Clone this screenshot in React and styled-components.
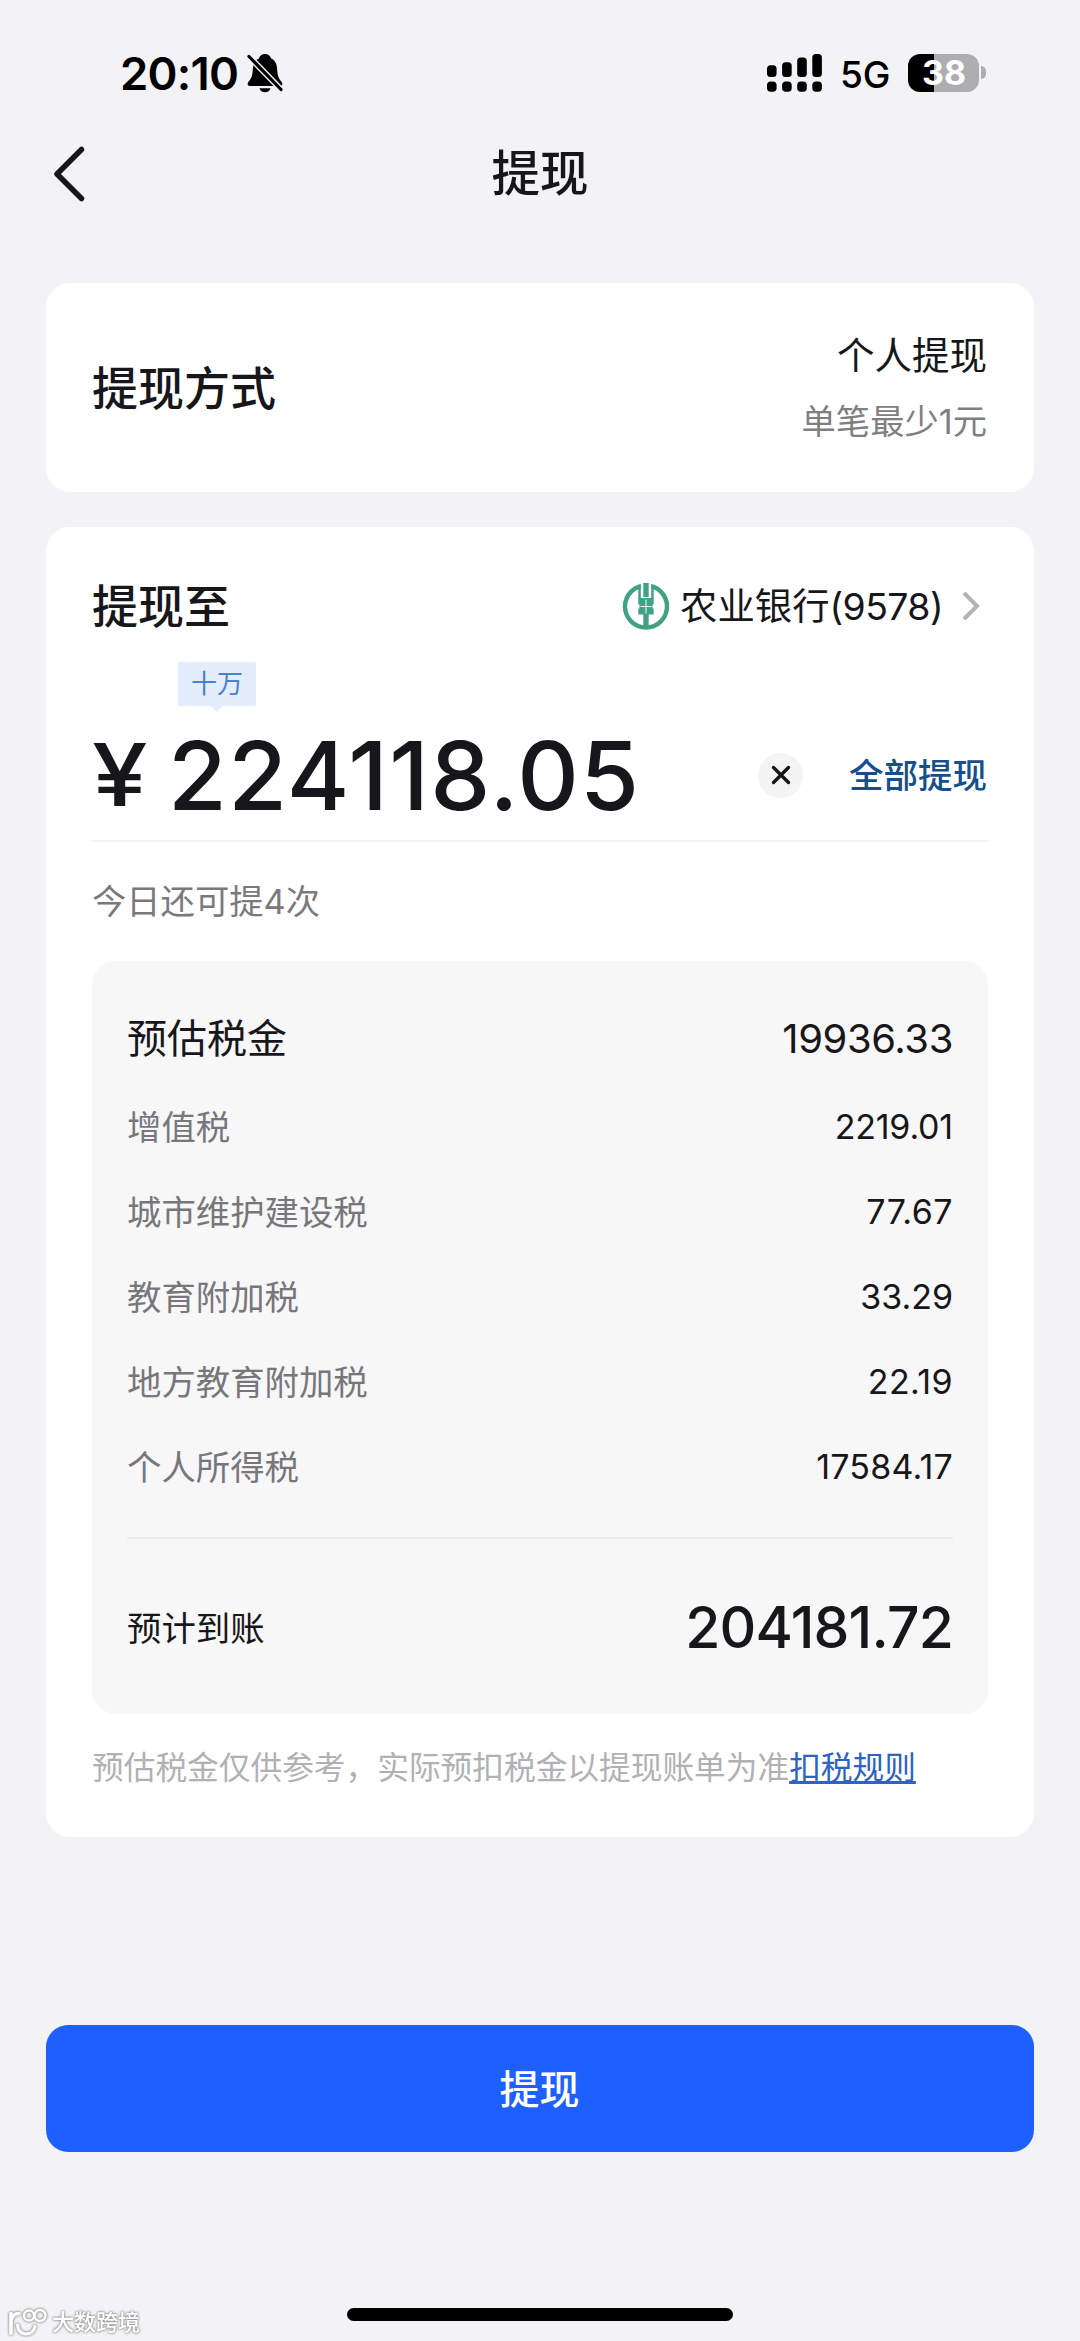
import React from "react";
import styled, { createGlobalStyle } from "styled-components";

const taxes = [
  { name: "增值税", value: "2219.01", spacing: "-0.2px" },
  { name: "城市维护建设税", value: "77.67", spacing: "0.5px" },
  { name: "教育附加税", value: "33.29" },
  { name: "地方教育附加税", value: "22.19", spacing: "0.4px" },
  { name: "个人所得税", value: "17584.17", spacing: "0.2px" },
];

export default function App() {
  return (
    <Page>
      <GlobalStyle />
      <StatusBar>
        <Clock>20:10</Clock>
        <BellOff />
        <StatusRight>
          <Signal />
          <Network>5G</Network>
          <Battery>38</Battery>
          <BatteryNub />
        </StatusRight>
      </StatusBar>
      <NavBar>
        <BackIcon />
        <Title>提现</Title>
      </NavBar>

      <MethodCard>
        <Heading>提现方式</Heading>
        <Method>
          <Text $size={37.5} $line={66}>个人提现</Text>
          <Text $size={34.3} $line={65} $color="#7f7f82">单笔最少1元</Text>
        </Method>
      </MethodCard>

      <AmountCard>
        <CardHead>
          <Heading>提现至</Heading>
          <Bank>
            <BankLogo />
            <BankName>农业银行<CardNo>(9578)</CardNo></BankName>
            <ChevronIcon />
          </Bank>
        </CardHead>
        <UnitTag>十万</UnitTag>
        <AmountRow>
          <Yen>¥</Yen>
          <Amount>224118.05</Amount>
          <ClearButton>
            <CloseIcon />
          </ClearButton>
          <AllButton>全部提现</AllButton>
        </AmountRow>
        <Text as="p" $size={34.3} $line={119} $color="#7a7a7c">今日还可提4次</Text>

        <TaxBox>
          <TaxTitle>
            <span>预估税金</span>
            <TaxSum>19936.33</TaxSum>
          </TaxTitle>
          {taxes.map((tax) => (
            <TaxRow key={tax.name}>
              <TaxName>{tax.name}</TaxName>
              <TaxValue $spacing={tax.spacing}>{tax.value}</TaxValue>
            </TaxRow>
          ))}
          <TotalRow>
            <span>预计到账</span>
            <Total>204181.72</Total>
          </TotalRow>
        </TaxBox>
        <Note>
          预估税金仅供参考，实际预扣税金以提现账单为准<RuleLink>扣税规则</RuleLink>
        </Note>
      </AmountCard>

      <SubmitButton>提现</SubmitButton>
      <HomeIndicator />
      <Watermark>
        <WatermarkLogo />
        大数跨境
      </Watermark>
    </Page>
  );
}

function BellOff() {
  return (
    <BellSvg viewBox="0 0 36 40">
      <path d="M18 1c-3.200 0-5.400 1.900-5.900 4.200C8.200 7 6 11 5.900 15.500 5.600 23 4.200 25.500 1.700 28.500c-2 2.500-1 4.500 1.300 4.500h30c2.300 0 3.300-2 1.300-4.500-2.500-3-3.900-5.500-4.200-13C30 11 27.800 7 23.900 5.200 23.400 2.900 21.200 1 18 1z" />
      <path d="M12.500 35.200h11c-.6 2.600-2.700 4-5.500 4s-4.900-1.400-5.500-4z" />
      <path d="M1.500 3 34.500 37" stroke="#f3f3f6" strokeWidth="6" />
      <path d="M2 3.500 34 36.500" stroke="#000" strokeWidth="3.200" strokeLinecap="round" />
    </BellSvg>
  );
}

function Signal() {
  const tops = [11.3, 8.3, 3.6, 0];
  return (
    <SignalSvg viewBox="0 0 55 38">
      {tops.map((y, i) => (
        <g key={y}>
          <rect x={i * 15.1} y={y} width="9.6" height={23 - y} rx="3.5" />
          <rect x={i * 15.1} y="27.5" width="9.6" height="10.3" rx="3.8" />
        </g>
      ))}
    </SignalSvg>
  );
}

function BackIcon() {
  return (
    <BackSvg viewBox="0 0 34 58">
      <path d="M29.500 4.500 5 29l24.500 24.500" />
    </BackSvg>
  );
}

function ChevronIcon() {
  return (
    <ChevronSvg viewBox="0 0 20 32">
      <path d="M3 3l13 13L3 29" />
    </ChevronSvg>
  );
}

function CloseIcon() {
  return (
    <svg width="20" height="20" viewBox="0 0 20 20" fill="none" stroke="#161618" strokeWidth="3.4" strokeLinecap="round">
      <path d="M2.500 2.500l15 15M17.500 2.500l-15 15" />
    </svg>
  );
}

function BankLogo() {
  return (
    <LogoSvg viewBox="0 0 48 48">
      <circle cx="24" cy="24.5" r="21" fill="none" stroke="#3fa383" strokeWidth="4.4" />
      <path fill="#fff" d="M18.800 0h10.400v17H18.800z" />
      <path fill="#3fa383" d="M21.300 1h5.400v14h-5.400zM16.300 3h2.500v13.500h-2.500zM29.200 3h2.500v13.500h-2.500z" />
      <path fill="#3fa383" d="M16.300 16h15.400v6.500h-1.200v4h1.200v6H16.300v-6h1.200v-4h-1.200z" />
      <path fill="#3fa383" d="M21.300 32h5.400v13h-5.400z" />
      <path d="M24 17.500v14M18.500 24.500h11" stroke="#fff" strokeWidth="1" />
    </LogoSvg>
  );
}

function WatermarkLogo() {
  return (
    <svg width="40" height="30" viewBox="0 0 40 30" fill="none" stroke="#fff" strokeLinecap="round">
      <path d="M3 6.500v20M3 13c1-4 4-6.500 8-6.500" strokeWidth="3.6" />
      <path d="M9.500 18c.5 6 4 9 8.500 9s8-3 9-7.500" strokeWidth="3.2" />
      <circle cx="21" cy="8.5" r="5" strokeWidth="2.4" />
      <circle cx="32" cy="8.5" r="5.5" strokeWidth="2.4" />
    </svg>
  );
}

const GlobalStyle = createGlobalStyle`
  * {
    box-sizing: border-box;
  }
  body {
    margin: 0;
    background: #f3f3f6;
  }
  p {
    margin: 0;
  }
  button {
    border: none;
    padding: 0;
    font-family: inherit;
    line-height: inherit;
  }
`;

const Page = styled.div`
  position: relative;
  display: flex;
  flex-direction: column;
  width: 1080px;
  height: 2341px;
  padding: 0 46px;
  overflow: hidden;
  background: #f3f3f6;
  color: #17171b;
  font-family: Inter, "Noto Sans CJK SC", sans-serif;
  line-height: 1.2;
`;

const StatusBar = styled.header`
  display: flex;
  align-items: center;
  height: 146px;
  padding: 0 48px 0 74px;
  color: #000;
`;

const Clock = styled.span`
  width: 119px;
  padding-top: 2px;
  font-size: 45.5px;
  font-weight: 600;
  letter-spacing: -0.8px;
  white-space: nowrap;
`;

const BellSvg = styled.svg`
  width: 36px;
  height: 40px;
  margin-left: 8px;
`;

const StatusRight = styled.div`
  display: flex;
  align-items: center;
  margin-left: auto;
`;

const SignalSvg = styled.svg`
  width: 55px;
  height: 38px;
  margin-right: 18px;
`;

const Network = styled.span`
  width: 51px;
  margin: 4px 17px 0 0;
  font-size: 37px;
  font-weight: 500;
`;

const Battery = styled.div`
  width: 71px;
  height: 38px;
  border-radius: 12px;
  padding-left: 1px;
  background: linear-gradient(to right, #000 26px, #aeaeb0 26px);
  color: #fff;
  font-size: 34px;
  font-weight: 700;
  line-height: 38px;
  text-align: center;
`;

const BatteryNub = styled.i`
  width: 5px;
  height: 13px;
  margin-left: 2px;
  border-radius: 0 5px 5px 0;
  background: #aeaeb0;
`;

const NavBar = styled.nav`
  display: grid;
  grid-template-columns: 34px 1fr 34px;
  align-items: center;
  height: 54px;
  margin: -1px 6px 84px;
`;

const BackSvg = styled.svg`
  width: 34px;
  height: 58px;
  fill: none;
  stroke: #17171b;
  stroke-width: 5.5;
  stroke-linecap: round;
  stroke-linejoin: round;
`;

const Title = styled.h1`
  margin: 0;
  font-size: 48.5px;
  font-weight: 500;
  line-height: 54px;
  text-align: center;
`;

const Card = styled.section`
  border-radius: 24px;
  background: #fff;
`;

const MethodCard = styled(Card)`
  display: flex;
  align-items: center;
  justify-content: space-between;
  height: 209px;
  padding: 0 46px;
`;

const Heading = styled.h2`
  margin: 0;
  font-size: 46px;
  font-weight: 500;
  line-height: 60px;
`;

const Method = styled.div`
  display: flex;
  flex-direction: column;
  align-items: flex-end;
  padding: 2px 1px 0 0;
`;

const Text = styled.span`
  color: ${(p) => p.$color || "inherit"};
  font-size: ${(p) => p.$size}px;
  line-height: ${(p) => p.$line}px;
`;

const AmountCard = styled(Card)`
  height: 1310px;
  margin-top: 35px;
  padding: 49px 46px 0;
`;

const CardHead = styled.div`
  display: flex;
  align-items: center;
  justify-content: space-between;
  height: 60px;
`;

const Bank = styled.div`
  display: flex;
  align-items: center;
`;

const LogoSvg = styled.svg`
  width: 48px;
  height: 48px;
  margin-right: 10px;
`;

const BankName = styled.span`
  width: 281px;
  padding-top: 2px;
  font-size: 37.4px;
  white-space: nowrap;
`;

const CardNo = styled.span`
  letter-spacing: -0.6px;
`;

const ChevronSvg = styled.svg`
  width: 20px;
  height: 32px;
  margin-right: 7px;
  fill: none;
  stroke: #b3b3b5;
  stroke-width: 4;
`;

const UnitTag = styled.div`
  position: relative;
  width: 78px;
  height: 44px;
  margin: 26px 0 0 86px;
  background: #e4edfb;
  color: #4a80d2;
  font-size: 26px;
  line-height: 44px;
  text-align: center;

  &::after {
    content: "";
    position: absolute;
    top: 44px;
    left: 33px;
    border: 6px solid transparent;
    border-top-color: #e4edfb;
    border-bottom: none;
  }
`;

const AmountRow = styled.div`
  display: flex;
  align-items: center;
  height: 136px;
  padding: 4px 1px 0 0;
  border-bottom: 2px solid #f1f1f2;
  white-space: nowrap;
`;

const Yen = styled.span`
  width: 76px;
  font-size: 86px;
  font-weight: 500;
  line-height: 100px;
  transform: scaleX(1.16);
  transform-origin: left;
`;

const Amount = styled.span`
  width: 500px;
  font-size: 95.5px;
  font-weight: 500;
  letter-spacing: 1.3px;
  line-height: 100px;
`;

const ClearButton = styled.button`
  display: flex;
  align-items: center;
  justify-content: center;
  width: 45px;
  height: 45px;
  margin-left: auto;
  border-radius: 50%;
  background: #f4f4f5;
`;

const AllButton = styled.button`
  margin-left: 46px;
  padding-top: 2px;
  background: none;
  color: #174f8a;
  font-size: 34.5px;
  font-weight: 500;
`;

const TaxBox = styled.div`
  height: 753px;
  padding: 42px 35px 0;
  border-radius: 24px;
  background: #f7f7f8;
`;

const TaxTitle = styled.div`
  display: flex;
  align-items: center;
  justify-content: space-between;
  height: 72px;
  margin-bottom: 10px;
  font-size: 40px;
`;

const TaxSum = styled.span`
  letter-spacing: -0.4px;
`;

const TaxRow = styled.div`
  display: flex;
  align-items: center;
  justify-content: space-between;
  height: 85px;
`;

const TaxName = styled.span`
  color: #77777b;
  font-size: 34.4px;
`;

const TaxValue = styled.span`
  font-size: 34px;
  letter-spacing: ${(p) => p.$spacing || "normal"};
`;

const TotalRow = styled.div`
  display: flex;
  align-items: center;
  justify-content: space-between;
  height: 177px;
  margin-top: 27px;
  padding-top: 4px;
  border-top: 2px solid #ececee;
  font-size: 34.4px;
`;

const Total = styled.strong`
  font-size: 57px;
  font-weight: 500;
  letter-spacing: -0.8px;
`;

const Note = styled.p`
  color: #b1b1b3;
  font-size: 31.7px;
  line-height: 108px;
  white-space: nowrap;
`;

const RuleLink = styled.a`
  color: #2d62c6;
  text-decoration: underline;
  text-decoration-thickness: 3px;
  text-underline-offset: 2px;
  text-decoration-skip-ink: none;
`;

const SubmitButton = styled.button`
  height: 127px;
  margin-top: 188px;
  padding: 2px 1px 0 0;
  border-radius: 22px;
  background: #1e60ff;
  color: #fff;
  font-size: 40px;
  font-weight: 500;
`;

const HomeIndicator = styled.div`
  align-self: center;
  width: 386px;
  height: 13px;
  margin-top: 156px;
  border-radius: 7px;
  background: #000;
`;

const Watermark = styled.div`
  position: absolute;
  left: 8px;
  top: 2305px;
  display: flex;
  align-items: center;
  gap: 4px;
  color: #fff;
  font-size: 22px;
  font-weight: 500;
  line-height: 34px;
  filter: drop-shadow(0 0 1px #8a8a8a) drop-shadow(0 0 1px #b0b0b0);
`;
